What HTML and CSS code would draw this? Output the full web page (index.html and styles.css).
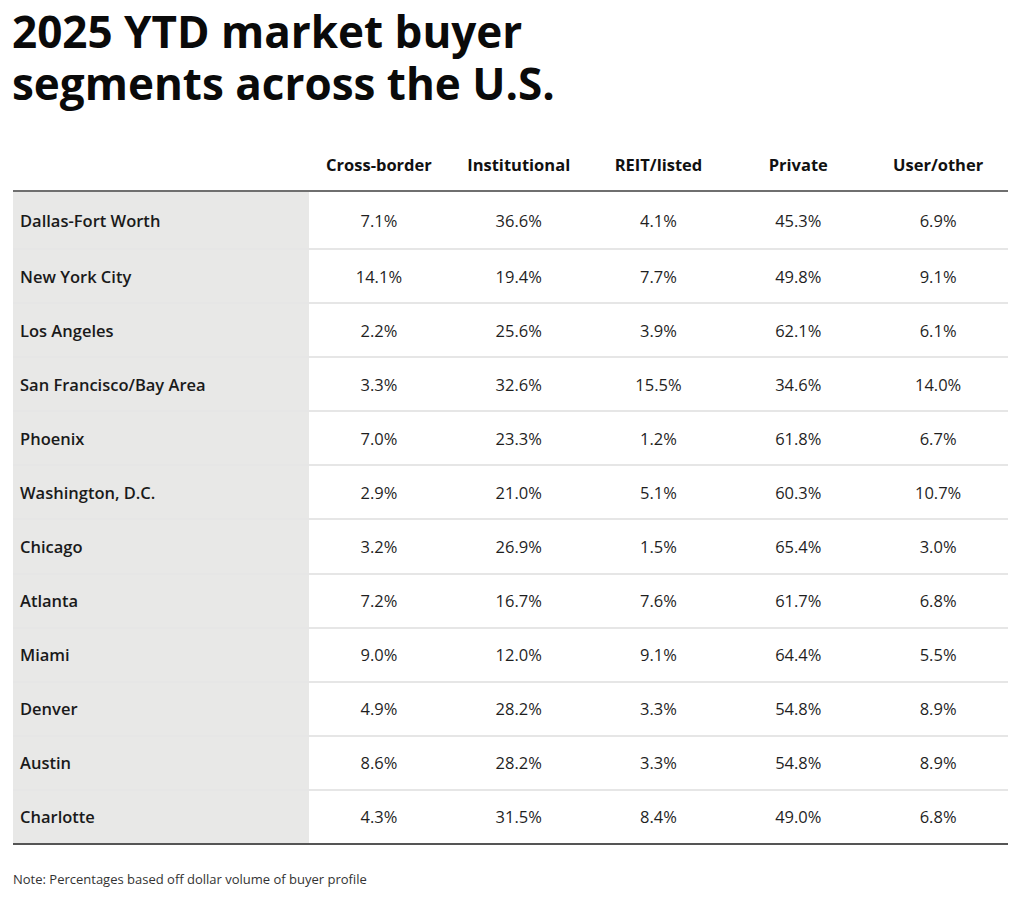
FILE: index.html
```html
<!DOCTYPE html>
<html lang="en">
<head>
<meta charset="utf-8">
<title>2025 YTD market buyer segments across the U.S.</title>
<link rel="stylesheet" href="styles.css">
</head>
<body>
<main class="page">
  <h1 class="title">2025 YTD market buyer<br>segments across the U.S.</h1>
  <div class="table">
    <div class="row head">
      <div class="cell label"></div>
      <div class="cell">Cross-border</div>
      <div class="cell">Institutional</div>
      <div class="cell">REIT/listed</div>
      <div class="cell">Private</div>
      <div class="cell">User/other</div>
    </div>
    <div class="row first"><div class="cell label">Dallas-Fort Worth</div><div class="cell">7.1%</div><div class="cell">36.6%</div><div class="cell">4.1%</div><div class="cell">45.3%</div><div class="cell">6.9%</div></div>
    <div class="row"><div class="cell label">New York City</div><div class="cell">14.1%</div><div class="cell">19.4%</div><div class="cell">7.7%</div><div class="cell">49.8%</div><div class="cell">9.1%</div></div>
    <div class="row"><div class="cell label">Los Angeles</div><div class="cell">2.2%</div><div class="cell">25.6%</div><div class="cell">3.9%</div><div class="cell">62.1%</div><div class="cell">6.1%</div></div>
    <div class="row"><div class="cell label">San Francisco/Bay Area</div><div class="cell">3.3%</div><div class="cell">32.6%</div><div class="cell">15.5%</div><div class="cell">34.6%</div><div class="cell">14.0%</div></div>
    <div class="row"><div class="cell label">Phoenix</div><div class="cell">7.0%</div><div class="cell">23.3%</div><div class="cell">1.2%</div><div class="cell">61.8%</div><div class="cell">6.7%</div></div>
    <div class="row"><div class="cell label">Washington, D.C.</div><div class="cell">2.9%</div><div class="cell">21.0%</div><div class="cell">5.1%</div><div class="cell">60.3%</div><div class="cell">10.7%</div></div>
    <div class="row"><div class="cell label">Chicago</div><div class="cell">3.2%</div><div class="cell">26.9%</div><div class="cell">1.5%</div><div class="cell">65.4%</div><div class="cell">3.0%</div></div>
    <div class="row"><div class="cell label">Atlanta</div><div class="cell">7.2%</div><div class="cell">16.7%</div><div class="cell">7.6%</div><div class="cell">61.7%</div><div class="cell">6.8%</div></div>
    <div class="row"><div class="cell label">Miami</div><div class="cell">9.0%</div><div class="cell">12.0%</div><div class="cell">9.1%</div><div class="cell">64.4%</div><div class="cell">5.5%</div></div>
    <div class="row"><div class="cell label">Denver</div><div class="cell">4.9%</div><div class="cell">28.2%</div><div class="cell">3.3%</div><div class="cell">54.8%</div><div class="cell">8.9%</div></div>
    <div class="row"><div class="cell label">Austin</div><div class="cell">8.6%</div><div class="cell">28.2%</div><div class="cell">3.3%</div><div class="cell">54.8%</div><div class="cell">8.9%</div></div>
    <div class="row last"><div class="cell label">Charlotte</div><div class="cell">4.3%</div><div class="cell">31.5%</div><div class="cell">8.4%</div><div class="cell">49.0%</div><div class="cell">6.8%</div></div>
  </div>
  <p class="note">Note: Percentages based off dollar volume of buyer profile</p>
</main>
</body>
</html>
```

FILE: styles.css
```css
* { box-sizing: border-box; }
html, body { margin: 0; padding: 0; background: #fff; }
body {
  font-family: "Open Sans", "Liberation Sans", sans-serif;
  color: #1a1a1a;
}
.page {
  padding: 5px 16px 0 13px;
}
.title {
  margin: 0 0 0 -1px;
  font-size: 44px;
  line-height: 52px;
  font-weight: 700;
  color: #0a0a0a;
}
.table {
  margin-top: 29px;
  width: 995px;
}
.row {
  display: grid;
  grid-template-columns: 296px repeat(5, 1fr);
  height: 54.1px;
  border-bottom: 2px solid #e6e6e6;
}
.row.head {
  height: 54px;
  border-bottom: 2px solid #6f6f6f;
}
.row.first {
  height: 58px;
}
.row.last {
  border-bottom: 2px solid #555;
}
.cell {
  display: flex;
  align-items: center;
  justify-content: center;
  font-size: 16.5px;
  color: #1f1f1f;
}
.cell.label {
  justify-content: flex-start;
  padding-left: 7px;
  font-weight: 600;
  background: #e8e8e7;
  color: #1a1a1a;
}
.row.head .cell {
  font-weight: 700;
  color: #111;
}
.row.head .cell.label {
  background: transparent;
}
.note {
  margin: 25px 0 0;
  font-size: 13px;
  color: #333;
}
```
